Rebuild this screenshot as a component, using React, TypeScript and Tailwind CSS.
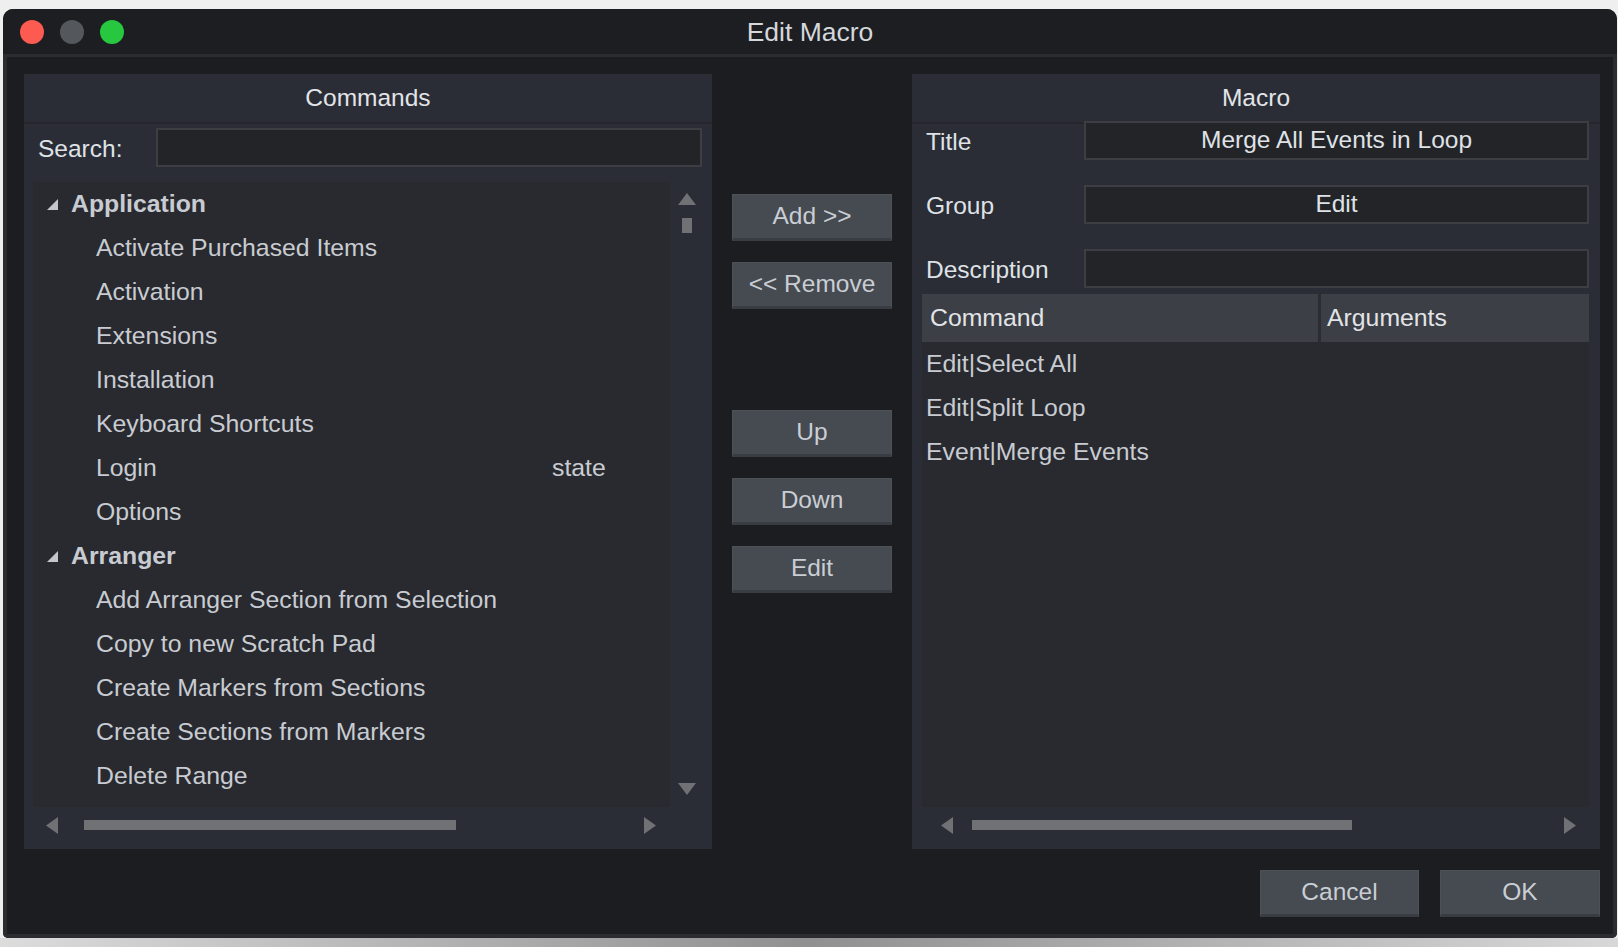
const appItems = [
  "Activate Purchased Items",
  "Activation",
  "Extensions",
  "Installation",
  "Keyboard Shortcuts",
  "Login",
  "Options",
];

const arrangerItems = [
  "Add Arranger Section from Selection",
  "Copy to new Scratch Pad",
  "Create Markers from Sections",
  "Create Sections from Markers",
  "Delete Range",
];

const macroRows = ["Edit|Select All", "Edit|Split Loop", "Event|Merge Events"];

function Disclosure() {
  return (
    <svg width="11" height="11" viewBox="0 0 11 11" className="shrink-0">
      <polygon points="11,0 11,11 0,11" fill="#c3c6cb" />
    </svg>
  );
}

function Arrow({ dir }: { dir: "up" | "down" | "left" | "right" }) {
  if (dir === "up")
    return (
      <svg width="18" height="12" viewBox="0 0 18 12">
        <polygon points="9,0 18,12 0,12" fill="#6f7175" />
      </svg>
    );
  if (dir === "down")
    return (
      <svg width="18" height="12" viewBox="0 0 18 12">
        <polygon points="0,0 18,0 9,12" fill="#6f7175" />
      </svg>
    );
  if (dir === "left")
    return (
      <svg width="12" height="17" viewBox="0 0 12 17">
        <polygon points="12,0 12,17 0,8.5" fill="#6f7175" />
      </svg>
    );
  return (
    <svg width="12" height="17" viewBox="0 0 12 17">
      <polygon points="0,0 12,8.5 0,17" fill="#6f7175" />
    </svg>
  );
}

function Button({ label, w = "w-[160px]" }: { label: string; w?: string }) {
  return (
    <button
      className={`${w} h-[47px] shrink-0 bg-[#464a51] border border-[#4d5158] border-b-[3px] border-b-[#393c42] text-[#c9ced4] text-[24.5px] leading-none`}
    >
      {label}
    </button>
  );
}

function PanelHeader({ title }: { title: string }) {
  return (
    <div className="h-[50px] shrink-0 flex items-center justify-center border-b-2 border-[#25272c] text-[#e2e4e8] text-[24.5px]">
      {title}
    </div>
  );
}

function HScroll({ left, thumb, right }: { left: string; thumb: string; right: string }) {
  return (
    <div className="h-[42px] shrink-0 flex items-center pb-[6px]">
      <div className={`${left} flex items-center`}>
        <Arrow dir="left" />
      </div>
      <div className={`${thumb} h-[10px] bg-[#707174]`} />
      <div className={`${right} flex items-center`}>
        <Arrow dir="right" />
      </div>
    </div>
  );
}

function Field({ label, value }: { label: string; value: string }) {
  return (
    <div className="flex items-center h-[39px]">
      <div className="w-[172px] pl-[14px] pt-[4px] text-[#dfe2e6] text-[24.5px]">{label}</div>
      <div className="w-[505px] h-[39px] bg-[#232428] border-2 border-[#3c3e43] flex items-center justify-center text-[#dfe2e6] text-[24.5px]">
        {value}
      </div>
    </div>
  );
}

export default function App() {
  return (
    <div className="w-[1618px] h-[947px] bg-[#efefef] overflow-hidden font-['Liberation_Sans',Arial,sans-serif]">
      <div className="ml-[3px] mt-[9px] w-[1614px] h-[929px] rounded-t-[10px] rounded-b-[5px] bg-[#1b1d20] flex flex-col overflow-hidden">
        {/* Title bar */}
        <div className="relative h-[45px] shrink-0 bg-[#1c1e21] flex items-center justify-center">
          <div className="absolute left-[17px] top-[11px] flex gap-[16px]">
            <span className="w-[24px] h-[24px] rounded-full bg-[#fd5a52]" />
            <span className="w-[24px] h-[24px] rounded-full bg-[#54575b]" />
            <span className="w-[24px] h-[24px] rounded-full bg-[#27c840]" />
          </div>
          <span className="text-[#d4d7db] text-[26.5px] pt-[2px]">Edit Macro</span>
        </div>

        {/* Body */}
        <div className="flex-1 flex flex-col border-x-4 border-b-4 border-t-[3px] border-[#2b2c30]">
          <div className="flex pl-[17px] pt-[17px]">
            {/* Commands panel */}
            <div className="w-[688px] h-[775px] bg-[#2a2d35] flex flex-col">
              <PanelHeader title="Commands" />
              <div className="flex items-center mt-[4px] h-[39px]">
                <div className="w-[132px] pl-[14px] pt-[4px] text-[#dfe2e6] text-[24.5px]">Search:</div>
                <div className="w-[546px] h-[39px] bg-[#232428] border-2 border-[#3c3e43]" />
              </div>
              <div className="flex mt-[15px] h-[625px]">
                <div className="ml-[9px] w-[637px] bg-[#292a2f] text-[#c8ccd2] text-[24.8px] overflow-hidden">
                  <div className="h-[44px] flex items-center pl-[14px] gap-[13px]">
                    <Disclosure />
                    <span className="font-bold">Application</span>
                  </div>
                  {appItems.map((item) => (
                    <div key={item} className="h-[44px] flex items-center pl-[63px]">
                      <span className="w-[456px]">{item}</span>
                      {item === "Login" && <span>state</span>}
                    </div>
                  ))}
                  <div className="h-[44px] flex items-center pl-[14px] gap-[13px]">
                    <Disclosure />
                    <span className="font-bold">Arranger</span>
                  </div>
                  {arrangerItems.map((item) => (
                    <div key={item} className="h-[44px] flex items-center pl-[63px]">
                      {item}
                    </div>
                  ))}
                </div>
                <div className="w-[42px] flex flex-col items-center pt-[11px] pb-[12px] pr-[9px]">
                  <Arrow dir="up" />
                  <div className="w-[10px] h-[15px] bg-[#6f7175] mt-[13px]" />
                  <div className="flex-1" />
                  <Arrow dir="down" />
                </div>
              </div>
              <HScroll left="ml-[22px] w-[38px]" thumb="w-[372px]" right="ml-[188px]" />
            </div>

            {/* Middle buttons */}
            <div className="w-[200px] flex flex-col items-center pt-[120px]">
              <Button label="Add >>" />
              <div className="h-[21px]" />
              <Button label="<< Remove" />
              <div className="h-[101px]" />
              <Button label="Up" />
              <div className="h-[21px]" />
              <Button label="Down" />
              <div className="h-[21px]" />
              <Button label="Edit" />
            </div>

            {/* Macro panel */}
            <div className="w-[688px] h-[775px] bg-[#2a2d35] flex flex-col">
              <PanelHeader title="Macro" />
              <div className="-mt-[3px] flex flex-col gap-[25px]">
                <Field label="Title" value="Merge All Events in Loop" />
                <Field label="Group" value="Edit" />
                <Field label="Description" value="" />
              </div>
              <div className="ml-[10px] w-[667px] mt-[6px] flex-1 flex flex-col bg-[#292a2f]">
                <div className="h-[48px] flex bg-[#3c3f45] text-[#e2e4e8] text-[24.8px]">
                  <div className="w-[399px] flex items-center pl-[8px] border-r-[3px] border-[#2b2d32]">Command</div>
                  <div className="flex-1 flex items-center pl-[6px]">Arguments</div>
                </div>
                <div className="text-[#c8ccd2] text-[24.8px]">
                  {macroRows.map((row) => (
                    <div key={row} className="h-[44px] flex items-center pl-[4px]">
                      {row}
                    </div>
                  ))}
                </div>
              </div>
              <HScroll left="ml-[29px] w-[31px]" thumb="w-[380px]" right="ml-[212px]" />
            </div>
          </div>

          {/* Footer buttons */}
          <div className="flex justify-end gap-[21px] pr-[13px] mt-[21px]">
            <Button label="Cancel" w="w-[159px]" />
            <Button label="OK" />
          </div>
        </div>
      </div>
      <div className="h-[9px] bg-gradient-to-r from-[#dcdcdc] via-[#909090] to-[#d8d8d8]" />
    </div>
  );
}
